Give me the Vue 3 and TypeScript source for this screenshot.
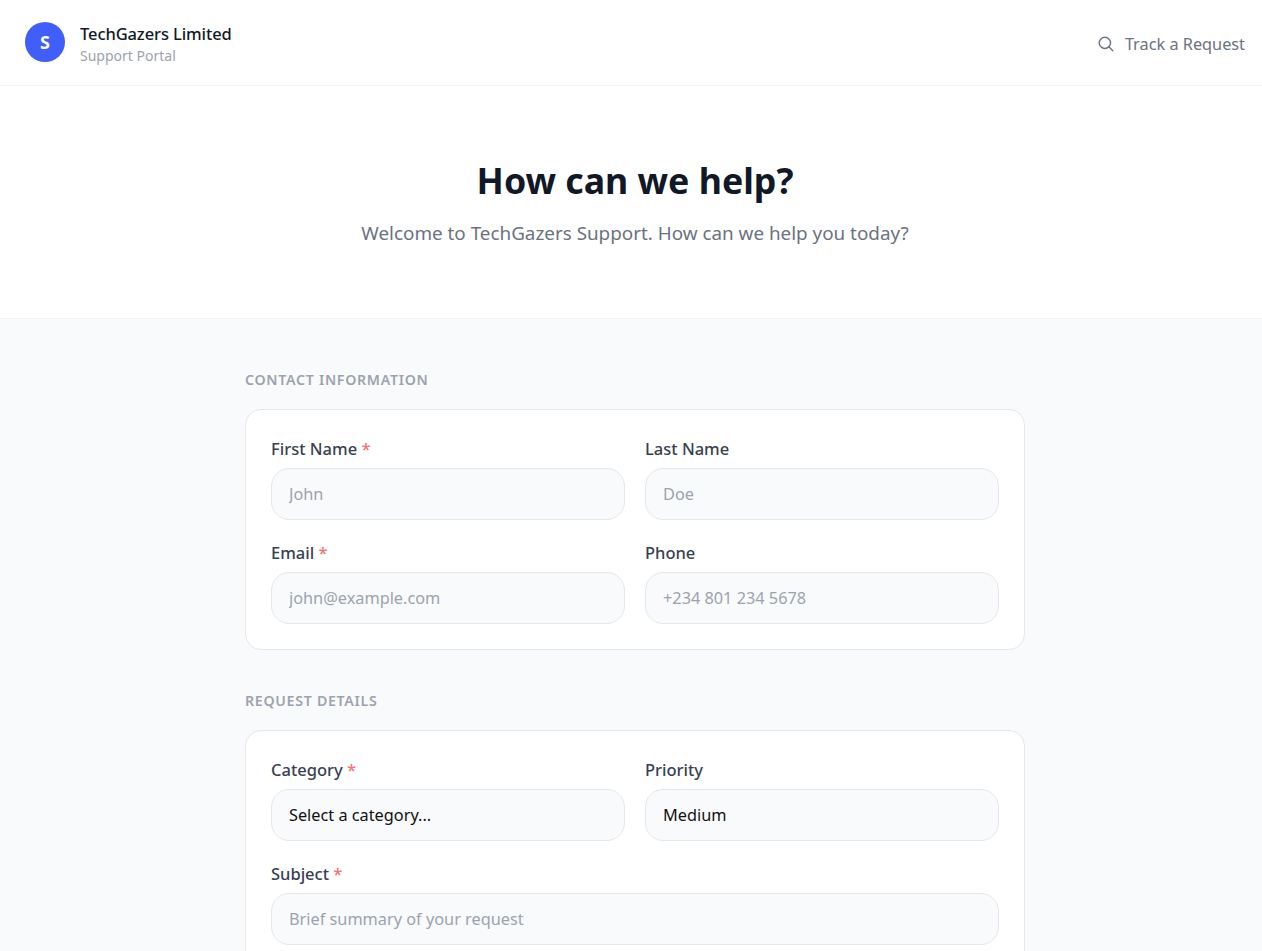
<script setup lang="ts">
interface Field {
  label: string
  required?: boolean
  placeholder?: string
  options?: string[]
  wide?: boolean
}
const contact: Field[] = [
  { label: 'First Name', required: true, placeholder: 'John' },
  { label: 'Last Name', placeholder: 'Doe' },
  { label: 'Email', required: true, placeholder: 'john@example.com' },
  { label: 'Phone', placeholder: '+234 801 234 5678' },
]
const details: Field[] = [
  { label: 'Category', required: true, options: ['Select a category...'] },
  { label: 'Priority', options: ['Medium'] },
  { label: 'Subject', required: true, placeholder: 'Brief summary of your request', wide: true },
]
const sections = [
  { title: 'Contact Information', fields: contact },
  { title: 'Request Details', fields: details },
]
</script>

<template>
  <div class="page">
    <header class="topbar">
      <div class="brand">
        <span class="avatar">S</span>
        <div class="brand-text">
          <div class="brand-name">TechGazers Limited</div>
          <div class="brand-sub">Support Portal</div>
        </div>
      </div>
      <a class="track" href="#">
        <svg width="18" height="18" viewBox="0 0 24 24" fill="none" stroke="currentColor" stroke-width="1.9" stroke-linecap="round" stroke-linejoin="round">
          <circle cx="10.5" cy="10.5" r="7.5" />
          <path d="M21 21l-5.2-5.2" />
        </svg>
        <span>Track a Request</span>
      </a>
    </header>

    <section class="hero">
      <h1>How can we help?</h1>
      <p>Welcome to TechGazers Support. How can we help you today?</p>
    </section>

    <main class="content">
      <div class="form">
        <section v-for="s in sections" :key="s.title" class="block">
          <h2>{{ s.title }}</h2>
          <div class="card">
            <div v-for="f in s.fields" :key="f.label" class="field" :class="{ wide: f.wide }">
              <label>{{ f.label }}<span v-if="f.required" class="req"> *</span></label>
              <select v-if="f.options" class="control">
                <option v-for="o in f.options" :key="o">{{ o }}</option>
              </select>
              <input v-else class="control" type="text" :placeholder="f.placeholder" />
            </div>
          </div>
        </section>
      </div>
    </main>
  </div>
</template>

<style>
html, body { margin: 0; overflow: hidden; background: #fff; }
</style>

<style scoped>
.page {
  width: 1270px;
  font-family: "Noto Sans", "Open Sans", sans-serif;
  color: #111827;
}
.topbar {
  height: 85px;
  padding: 0 25px;
  display: flex;
  align-items: center;
  justify-content: space-between;
  border-bottom: 1px solid #f3f4f6;
  background: #fff;
}
.brand { display: flex; align-items: center; gap: 15px; }
.avatar {
  width: 40px;
  height: 40px;
  margin-bottom: 1px;
  border-radius: 50%;
  background: #3f5efb;
  color: #fff;
  font-weight: 700;
  font-size: 18px;
  display: flex;
  align-items: center;
  justify-content: center;
}
.brand-text { padding-top: 2px; }
.brand-name { font-size: 16.5px; font-weight: 500; line-height: 24px; letter-spacing: -0.1px; }
.brand-sub { font-size: 14px; line-height: 20px; color: #9ca3af; }
.track {
  display: flex;
  align-items: center;
  gap: 10px;
  padding-top: 2px;
  font-size: 16.3px;
  color: #6b7280;
  text-decoration: none;
}
.hero {
  box-sizing: border-box;
  height: 233px;
  display: flex;
  flex-direction: column;
  align-items: center;
  justify-content: center;
  background: #fff;
  border-bottom: 1px solid #f3f4f6;
}
.hero h1 {
  margin: -2px 0 14px;
  font-size: 35.7px;
  line-height: 50px;
  font-weight: 700;
  color: #111827;
}
.hero p {
  margin: 0;
  font-size: 18.85px;
  line-height: 28px;
  color: #6b7280;
}
.content {
  background: #f9fafb;
  padding: 50px 0;
}
.form {
  width: 780px;
  margin: 0 auto;
  display: flex;
  flex-direction: column;
  gap: 40px;
}
.block h2 {
  margin: 0 0 19px;
  font-size: 14.2px;
  line-height: 21px;
  font-weight: 600;
  letter-spacing: 0.7px;
  text-transform: uppercase;
  color: #9ca3af;
}
.card {
  background: #fff;
  border: 1px solid #e5e7eb;
  border-radius: 16px;
  padding: 25px;
  display: grid;
  grid-template-columns: 1fr 1fr;
  column-gap: 20px;
  row-gap: 19px;
}
.field { display: flex; flex-direction: column; min-width: 0; }
.field.wide { grid-column: 1 / -1; }
.field label {
  padding-top: 1px;
  font-size: 16.5px;
  line-height: 25px;
  font-weight: 500;
  color: #374151;
  margin-bottom: 7px;
}
.req { color: #f87171; }
.control {
  height: 52px;
  box-sizing: border-box;
  width: 100%;
  padding: 0 17px;
  border: 1px solid #e5e7eb;
  border-radius: 18px;
  background: #f9fafb;
  font-family: inherit;
  font-size: 16.3px;
  color: #111;
  outline: none;
  appearance: none;
}
.control::placeholder { color: #9ca3af; opacity: 1; }
</style>
